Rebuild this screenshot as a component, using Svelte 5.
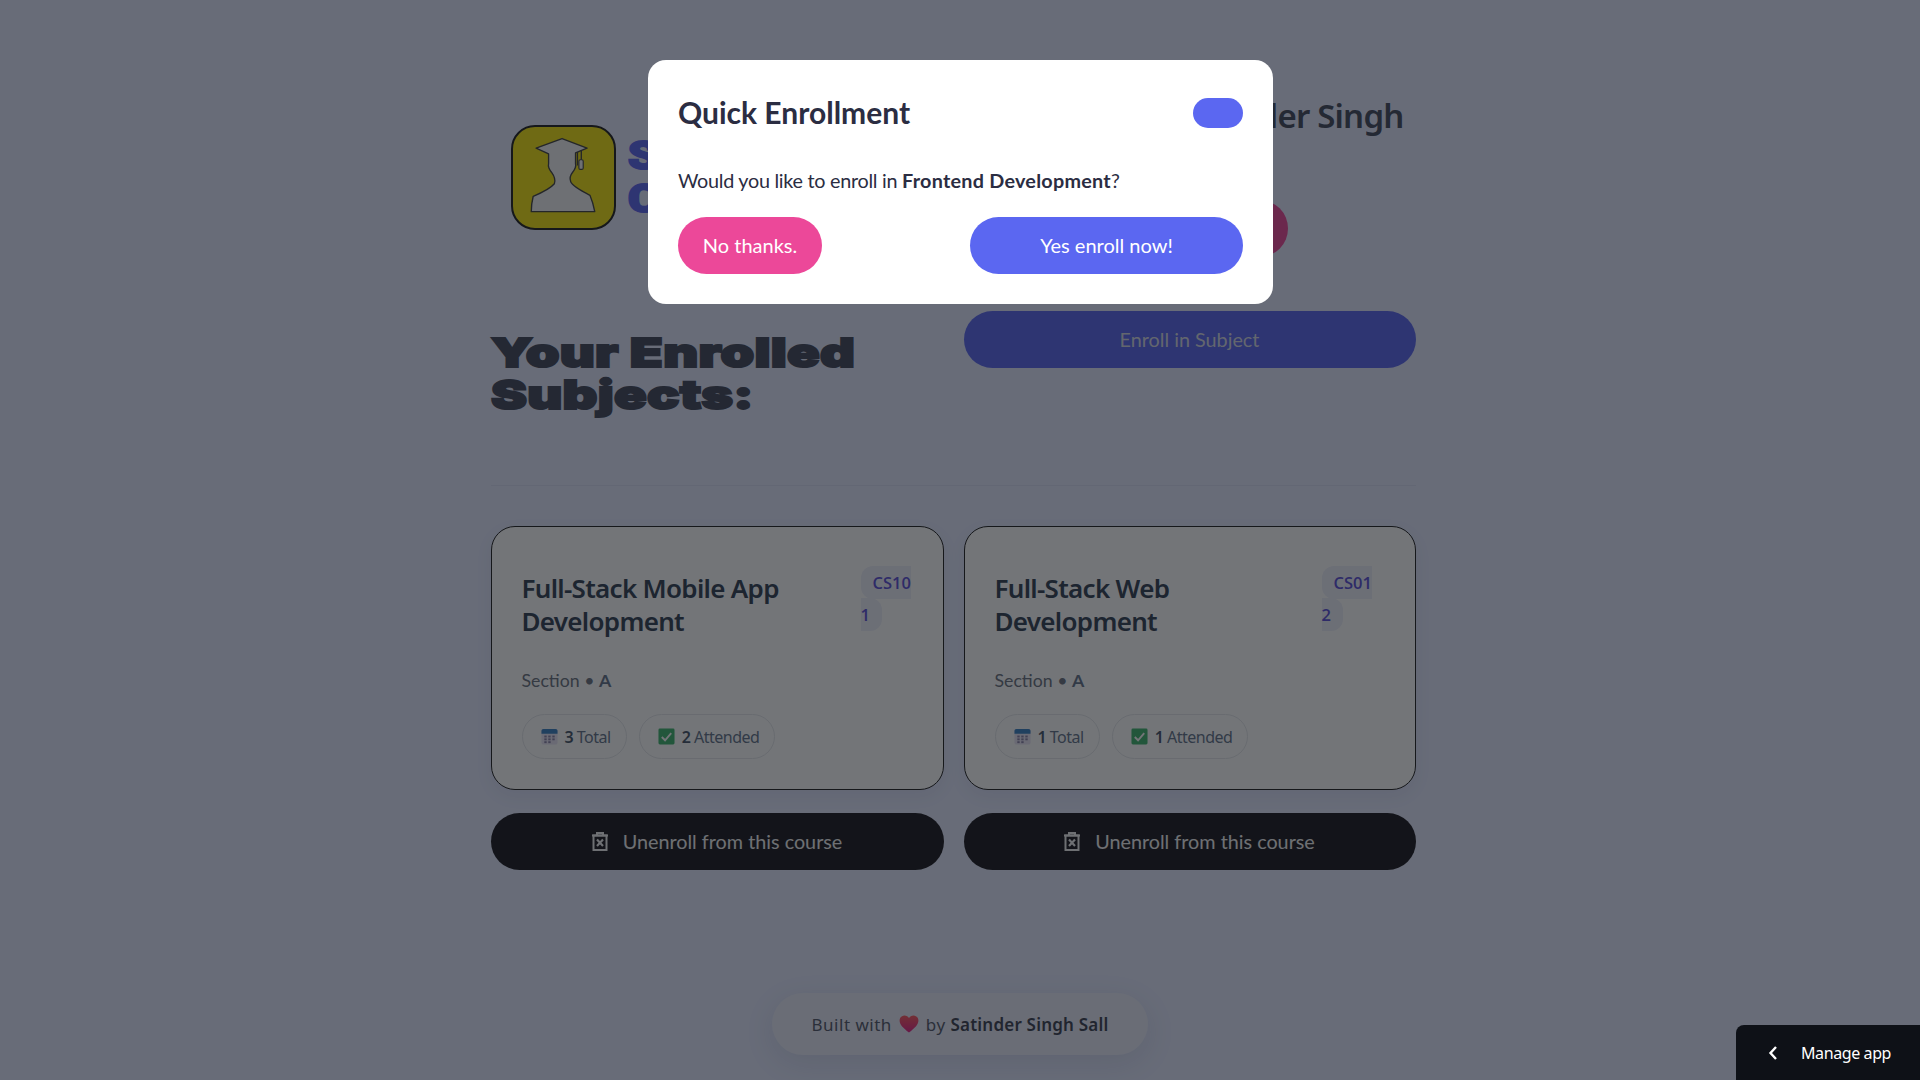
<script>
  // enrolled subjects shown on the dashboard
  const subjects = [
    { title: 'Full-Stack Mobile App Development', code: 'CS101', section: 'A', total: 3, attended: 2, narrow: false },
    { title: 'Full-Stack Web Development', code: 'CS012', section: 'A', total: 1, attended: 1, narrow: true }
  ];
</script>

<main class="page">
  <div class="grid">
    <div class="brand">
      <div class="logo">
        <svg viewBox="0 0 105 105" width="101" height="101">
          <path class="figure" d="M51 12 L77 22 L65 27 L65 38 Q66 42 62 47 Q58 52 60 57 Q62 62 80 71 Q83 78 85 88 L19 88 Q19 80 21 72 Q38 65 43 59 Q45 54 40 47 Q36 42 37 38 L37 28 L24 22 Z" />
          <path class="tassel" d="M67 26 L67 40 M71 24 L71 35" />
          <rect class="tassel-end" x="68.5" y="34" width="4.5" height="10" rx="1.5" />
        </svg>
      </div>
      <div class="brand-name">Student<br />Connect</div>
    </div>
    <div class="account">
      <h2>Welcome, Satinder Singh</h2>
      <button class="pill pink logout">Logout</button>
    </div>

    <h1>Your Enrolled<br />Subjects:</h1>
    <button class="pill indigo enroll">Enroll in Subject</button>

    <hr class="divider" />

    {#each subjects as s}
      <article class="card">
        <div class="card-head">
          <h3>{s.title}</h3>
          <div class="code-wrap" class:narrow={s.narrow}><span class="code">{s.code}</span></div>
        </div>
        <p class="section">Section • <b>{s.section}</b></p>
        <div class="stats">
          <span class="stat">
            <svg viewBox="0 0 18 18" width="17" height="17">
              <rect x="0.5" y="1" width="17" height="16.5" rx="2" fill="#e9e4f5" />
              <path d="M0.5 6 V3 a2 2 0 0 1 2-2 h13 a2 2 0 0 1 2 2 V6 Z" fill="#3b82c4" />
              <g fill="#8a84a8">
                <rect x="3.5" y="8" width="2.5" height="2" /><rect x="7.7" y="8" width="2.5" height="2" /><rect x="12" y="8" width="2.5" height="2" />
                <rect x="3.5" y="11" width="2.5" height="2" /><rect x="7.7" y="11" width="2.5" height="2" /><rect x="12" y="11" width="2.5" height="2" />
                <rect x="3.5" y="14" width="2.5" height="2" /><rect x="7.7" y="14" width="2.5" height="2" />
              </g>
            </svg>
            <span><b>{s.total}</b> Total</span>
          </span>
          <span class="stat">
            <svg viewBox="0 0 18 18" width="17" height="17">
              <rect x="0.5" y="0.5" width="17" height="17" rx="1.5" fill="#3fb56f" />
              <path d="M4 9.5 L7.5 13 L14 5.5" fill="none" stroke="#fff" stroke-width="2" />
            </svg>
            <span><b>{s.attended}</b> Attended</span>
          </span>
        </div>
      </article>
    {/each}

    {#each subjects as s}
      <button class="pill dark unenroll">
        <svg viewBox="0 0 16 19" width="16" height="19" fill="none" stroke="currentColor" stroke-width="2">
          <path d="M0 3.5 H16 M5 3 V1 H11 V3" />
          <rect x="1.5" y="3.5" width="13" height="14.5" />
          <path d="M5 7.5 L11 14 M11 7.5 L5 14" stroke-width="2.2" />
        </svg>
        Unenroll from this course
      </button>
    {/each}
  </div>

  <footer class="credit">
    <span>Built with</span>
    <svg viewBox="0 0 24 22" width="20" height="18">
      <defs>
        <linearGradient id="heart" x1="0" y1="0" x2="0" y2="1">
          <stop offset="0" stop-color="#ff5a5f" />
          <stop offset="1" stop-color="#e0218a" />
        </linearGradient>
      </defs>
      <path fill="url(#heart)" d="M12 21.5 C5 16 0.5 12 0.5 6.8 C0.5 3 3.4 0.5 6.6 0.5 C9 0.5 11 1.8 12 3.8 C13 1.8 15 0.5 17.4 0.5 C20.6 0.5 23.5 3 23.5 6.8 C23.5 12 19 16 12 21.5 Z" />
    </svg>
    <span>by <b>Satinder Singh Sall</b></span>
  </footer>
</main>

<div class="overlay">
  <div class="modal">
    <div class="modal-head">
      <h2>Quick Enrollment</h2>
      <button class="close" aria-label="Close"></button>
    </div>
    <p>Would you like to enroll in <b>Frontend Development</b>?</p>
    <div class="modal-actions">
      <button class="pill pink no">No thanks.</button>
      <button class="pill indigo yes">Yes enroll now!</button>
    </div>
  </div>
</div>

<div class="manage">
  <svg viewBox="0 0 10 16" width="10" height="16" fill="none" stroke="#fff" stroke-width="2.4"><path d="M8 2 L2.5 8 L8 14" /></svg>
  <span>Manage app</span>
</div>

<style>
  :global(body) {
    background: #e4e9ff;
    font-family: "Lato", sans-serif;
  }
  .page {
    height: 1080px;
    display: flex;
    flex-direction: column;
    align-items: center;
    box-sizing: border-box;
    overflow: hidden;
  }
  .grid {
    width: 925px;
    margin: 94px 14px 0 0;
    display: grid;
    grid-template-columns: 453px 452px;
    column-gap: 20px;
  }
  button {
    font-family: inherit;
    border: none;
  }
  .pill {
    height: 57px;
    padding-bottom: 2px;
    border-radius: 29px;
    font-size: 20px;
    color: #fff;
  }
  .pink { background: #ec4899; }
  .indigo { background: #5b67f1; }
  .dark { background: #1c1a1f; }

  .brand {
    display: flex;
    align-items: center;
    gap: 12px;
    padding: 31px 0 0 20px;
    height: 105px;
  }
  .logo {
    width: 105px;
    height: 105px;
    box-sizing: border-box;
    border: 2px solid #222;
    border-radius: 24px;
    background: #f5e411;
    flex: none;
  }
  .figure {
    fill: #f4f4f6;
    stroke: #444;
    stroke-width: 1.4;
    stroke-linejoin: round;
  }
  .tassel {
    fill: none;
    stroke: #444;
    stroke-width: 1.4;
  }
  .tassel-end {
    fill: #f4f4f6;
    stroke: #444;
    stroke-width: 1.2;
  }
  .brand-name {
    font-family: "Roboto", sans-serif;
    font-weight: 900;
    font-size: 38px;
    line-height: 43px;
    color: #5b67f1;
    -webkit-text-stroke: 2px #5b67f1;
    transform: scaleX(1.25);
    transform-origin: left;
  }
  .account {
    display: flex;
    flex-direction: column;
    align-items: center;
  }
  .account h2 {
    align-self: flex-end;
    margin: 0 12px 0 0;
    font-family: "Noto Sans", sans-serif;
    font-weight: 600;
    font-size: 33px;
    line-height: 44px;
    letter-spacing: -0.8px;
    color: #444a5e;
  }
  .logout {
    margin-top: 62px;
    width: 196px;
    margin-bottom: 54px;
  }

  h1 {
    margin: 21px 0 0;
    font-family: "Inter", sans-serif;
    font-weight: 900;
    font-size: 40px;
    line-height: 42px;
    letter-spacing: 0.2px;
    color: #44495c;
    -webkit-text-stroke: 2px #44495c;
    height: 153px;
    transform: scaleX(1.35);
    transform-origin: left top;
  }
  .enroll {
    width: 100%;
    color: #d8dbe8;
    font-size: 19.8px;
  }
  .divider {
    grid-column: 1 / -1;
    width: 100%;
    height: 1px;
    margin: 0 0 40px;
    border: none;
    background: rgba(30, 40, 80, 0.06);
  }

  .card {
    height: 264px;
    box-sizing: border-box;
    border: 1px solid #222;
    border-radius: 24px;
    background: #fff;
    padding: 45px 31px 0 30px;
    box-shadow: 0 6px 18px rgba(30, 40, 80, 0.06);
  }
  .card-head {
    display: flex;
    justify-content: space-between;
    align-items: flex-start;
    height: 80px;
  }
  h3 {
    margin: 0;
    width: 300px;
    font-family: "Noto Sans", sans-serif;
    font-weight: 600;
    font-size: 26px;
    line-height: 33px;
    letter-spacing: -0.7px;
    color: #334155;
  }
  .code-wrap {
    width: 51px;
    margin: -5px 0 0 0;
    line-height: 32px;
    font-size: 16.5px;
    font-weight: 600;
    font-family: "Open Sans", sans-serif;
    word-break: break-all;
  }
  .code-wrap.narrow {
    margin-right: 11px;
  }
  .code {
    background: #eef0fb;
    color: #5b4fd8;
    padding: 5px 12px;
    border-radius: 12px;
  }
  .section {
    margin: 17px 0 0;
    font-size: 17.7px;
    line-height: 24px;
    color: #6b7280;
  }
  .section b {
    color: #64748b;
    font-weight: 700;
  }
  .stats {
    display: flex;
    gap: 12px;
    margin-top: 21px;
  }
  .stat {
    display: flex;
    align-items: center;
    gap: 7px;
    height: 45px;
    box-sizing: border-box;
    padding: 0 15px 0 18px;
    border: 1px solid #e6e8ec;
    border-radius: 23px;
    background: #fff;
    font-family: "Noto Sans", sans-serif;
    font-size: 16px;
    letter-spacing: -0.5px;
    color: #64748b;
  }
  .stat b {
    color: #475569;
    font-weight: 600;
  }

  .unenroll {
    margin-top: 23px;
    width: 100%;
    display: flex;
    align-items: center;
    justify-content: center;
    gap: 15px;
    font-size: 19.8px;
    color: #f2f2f4;
  }

  .credit {
    margin-top: auto;
    margin-bottom: 25px;
    height: 62px;
    width: 376px;
    display: flex;
    align-items: center;
    justify-content: center;
    gap: 7px;
    border-radius: 31px;
    background: #e9ecfb;
    box-shadow: 0 8px 30px rgba(30, 40, 80, 0.1);
    font-family: "Noto Sans", sans-serif;
    font-size: 17px;
    letter-spacing: 0.5px;
    color: #555a6b;
  }
  .credit b {
    font-weight: 600;
    letter-spacing: 0.2px;
    color: #3d4252;
  }

  .overlay {
    position: fixed;
    inset: 0;
    background: rgba(14, 17, 23, 0.58);
  }
  .modal {
    position: absolute;
    left: 648px;
    top: 60px;
    width: 625px;
    height: 244px;
    box-sizing: border-box;
    padding: 38px 30px 0;
    border-radius: 18px;
    background: #fff;
  }
  .modal-head {
    display: flex;
    justify-content: space-between;
    align-items: center;
  }
  .modal h2 {
    margin: -1px 0 1px;
    font-size: 30px;
    line-height: 30px;
    font-weight: 700;
    color: #2b2d42;
  }
  .close {
    width: 50px;
    height: 30px;
    border-radius: 15px;
    background: #5b67f1;
  }
  .modal p {
    margin: 39px 0 0;
    font-size: 19.8px;
    line-height: 26px;
    letter-spacing: -0.27px;
    color: #2b2d42;
  }
  .modal p b {
    font-weight: 700;
    letter-spacing: 0.25px;
  }
  .modal-actions {
    display: flex;
    justify-content: space-between;
    margin-top: 24px;
  }
  .no { width: 144px; }
  .yes { width: 273px; }

  .manage {
    position: fixed;
    right: 0;
    bottom: 0;
    width: 184px;
    height: 55px;
    box-sizing: border-box;
    padding-left: 32px;
    display: flex;
    align-items: center;
    gap: 23px;
    border-top-left-radius: 8px;
    background: #0e1117;
    color: #fff;
    font-family: "Noto Sans", sans-serif;
    font-size: 16px;
    letter-spacing: -0.4px;
  }
</style>
